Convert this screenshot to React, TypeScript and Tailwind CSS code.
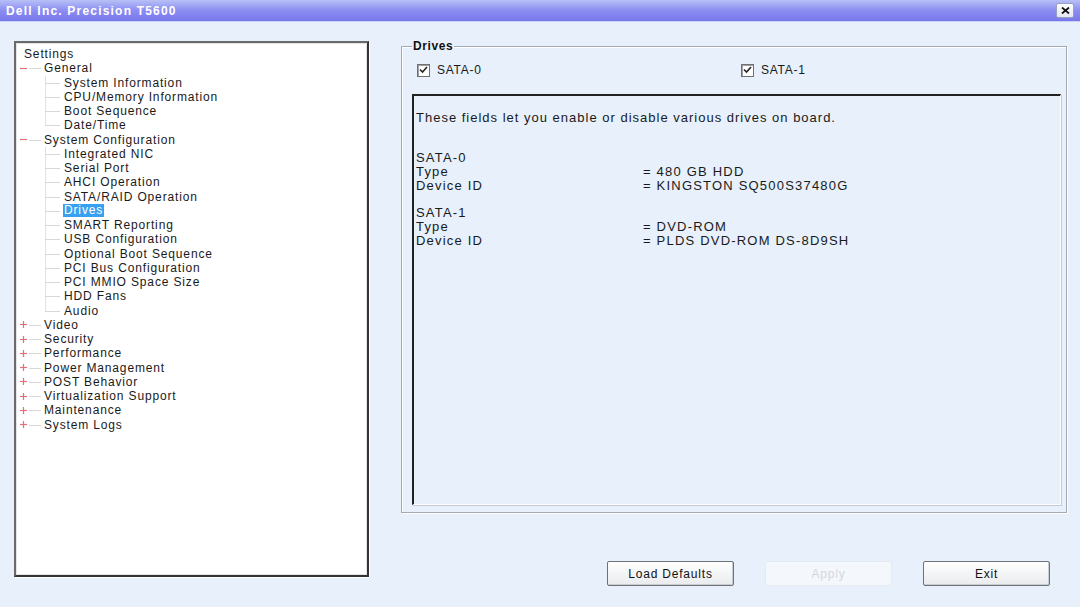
import { Fragment } from 'react';

type TreeNode = {
  label: string;
  level: 0 | 1 | 2;
  expander?: '+' | '-';
  last?: boolean;
  selected?: boolean;
};

const tree: TreeNode[] = [
  { label: 'Settings', level: 0 },
  { label: 'General', level: 1, expander: '-' },
  { label: 'System Information', level: 2 },
  { label: 'CPU/Memory Information', level: 2 },
  { label: 'Boot Sequence', level: 2 },
  { label: 'Date/Time', level: 2, last: true },
  { label: 'System Configuration', level: 1, expander: '-' },
  { label: 'Integrated NIC', level: 2 },
  { label: 'Serial Port', level: 2 },
  { label: 'AHCI Operation', level: 2 },
  { label: 'SATA/RAID Operation', level: 2 },
  { label: 'Drives', level: 2, selected: true },
  { label: 'SMART Reporting', level: 2 },
  { label: 'USB Configuration', level: 2 },
  { label: 'Optional Boot Sequence', level: 2 },
  { label: 'PCI Bus Configuration', level: 2 },
  { label: 'PCI MMIO Space Size', level: 2 },
  { label: 'HDD Fans', level: 2 },
  { label: 'Audio', level: 2, last: true },
  { label: 'Video', level: 1, expander: '+' },
  { label: 'Security', level: 1, expander: '+' },
  { label: 'Performance', level: 1, expander: '+' },
  { label: 'Power Management', level: 1, expander: '+' },
  { label: 'POST Behavior', level: 1, expander: '+' },
  { label: 'Virtualization Support', level: 1, expander: '+' },
  { label: 'Maintenance', level: 1, expander: '+' },
  { label: 'System Logs', level: 1, expander: '+' },
];

const drives = [
  { name: 'SATA-0', type: '480 GB HDD', id: 'KINGSTON SQ500S37480G' },
  { name: 'SATA-1', type: 'DVD-ROM', id: 'PLDS DVD-ROM DS-8D9SH' },
];

function Expander({ sign }: { sign: '+' | '-' }) {
  return (
    <div className="relative w-[20px] h-full flex items-center">
      <div className="absolute left-[10px] top-[7px] w-[12px] h-[1px] bg-[#d8d8d8]" />
      <svg width="9" height="9" viewBox="0 0 9 9" className="relative">
        <path d="M1 4.5 H8" stroke="#e0707a" strokeWidth="1.2" />
        {sign === '+' && <path d="M4.5 1 V8" stroke="#e0707a" strokeWidth="1.2" />}
      </svg>
    </div>
  );
}

function TreeRow({ node }: { node: TreeNode }) {
  if (node.level === 0) {
    return (
      <div className="h-[14.25px] flex items-center pl-[7px]">
        <span>{node.label}</span>
      </div>
    );
  }
  if (node.level === 1) {
    return (
      <div className="h-[14.25px] flex items-center pl-[2px]">
        <Expander sign={node.expander ?? '+'} />
        <span className="ml-[4px] px-[1px]">{node.label}</span>
      </div>
    );
  }
  return (
    <div className="h-[14.25px] flex items-center pl-[27px]">
      {/* vertical guide + elbow into the child label */}
      <div className="relative w-[18px] h-full">
        <div
          className={
            node.last
              ? 'absolute left-[1px] top-0 h-[7px] w-[1px] bg-[#e2e2e2]'
              : 'absolute left-[1px] top-0 h-full w-[1px] bg-[#e2e2e2]'
          }
        />
        <div className="absolute left-[1px] top-[7px] w-[15px] h-[1px] bg-[#d8d8d8]" />
      </div>
      <span
        className={
          node.selected
            ? 'ml-[1px] px-[1px] bg-[#38a0f0] text-white leading-[13px]'
            : 'ml-[1px] px-[1px]'
        }
      >
        {node.label}
      </span>
    </div>
  );
}

function Checkbox({ label }: { label: string }) {
  return (
    <label className="flex items-center gap-[7px]">
      <span className="w-[13px] h-[13px] border border-[#707070] bg-white shadow-[inset_1px_1px_0_#a0a0a0] flex items-center justify-center">
        <svg width="9" height="8" viewBox="0 0 9 8">
          <path d="M1 3.5 L3.5 6 L8 1" fill="none" stroke="#222" strokeWidth="1.6" />
        </svg>
      </span>
      <span>{label}</span>
    </label>
  );
}

function WinButton({ label, disabled }: { label: string; disabled?: boolean }) {
  return (
    <button
      disabled={disabled}
      className={
        disabled
          ? 'w-[127px] h-[25px] rounded-[2px] border border-[#e6ebf2] bg-[#f4f7fb] text-[#d4d8de]'
          : 'w-[127px] h-[25px] rounded-[2px] border border-[#6d7278] bg-gradient-to-b from-white to-[#e9ebee] text-[#111] shadow-[inset_-1px_-1px_0_#c9cdd2]'
      }
    >
      {label}
    </button>
  );
}

export default function App() {
  return (
    <div className="w-[1080px] h-[607px] bg-[#e7f0fb] flex flex-col overflow-hidden font-['Liberation_Sans',Arial,sans-serif] text-[12px] tracking-[0.85px] text-[#1a1a1a]">
      <div className="h-[22px] flex items-center justify-between bg-gradient-to-b from-[#b8c0f6] via-[#8c8cf2] to-[#7878ec] border-b border-[#c9d2f5]">
        <span className="pl-[6px] pt-[1px] text-white font-bold text-[12px] tracking-[1.2px]">
          Dell Inc. Precision T5600
        </span>
        <button className="mr-[6px] w-[18px] h-[15px] rounded-[2px] border border-[#9aa0c0] bg-gradient-to-b from-white to-[#e4e7ef] flex items-center justify-center">
          <svg width="9" height="7" viewBox="0 0 9 7">
            <path d="M1 0.5 L8 6.5 M8 0.5 L1 6.5" stroke="#111" strokeWidth="1.8" />
          </svg>
        </button>
      </div>

      <div className="flex flex-1">
        <div className="ml-[14px] mt-[19px] w-[355px] h-[536px] bg-white border-2 border-t-[#6a6a6a] border-l-[#6a6a6a] border-r-[#333] border-b-[#333] shadow-[1px_1px_0_#fff]">
          <div className="pt-[3px] border border-[#e4e4e4] h-full">
            {tree.map((node) => (
              <Fragment key={node.label}>
                <TreeRow node={node} />
              </Fragment>
            ))}
          </div>
        </div>

        <div className="ml-[32px] mt-[15px] flex flex-col">
          <fieldset className="w-[666px] h-[476px] border border-[#a3aab6] shadow-[inset_1px_1px_0_#fff,1px_1px_0_#fff] px-[10px] pt-[4px] pb-[7px]">
            <legend className="px-[1px] font-bold text-[12px] tracking-[0.6px] text-[#111]">
              Drives
            </legend>
            <div className="flex h-[22px] items-center pl-[5px] tracking-[0.75px]">
              <div className="w-[324px]">
                <Checkbox label="SATA-0" />
              </div>
              <Checkbox label="SATA-1" />
            </div>
            <div className="mt-[13px] h-[411px] mr-[-5px] border-t-2 border-l-2 border-t-[#222] border-l-[#222] border-r border-b border-r-[#fff] border-b-[#fff] shadow-[1px_1px_0_#c4cad3] px-[2px] pt-[14px] text-[13px] tracking-[1px]">
              <p className="leading-[16px]">These fields let you enable or disable various drives on board.</p>
              <div className="mt-[25px] flex flex-col gap-[13px]">
                {drives.map((d) => (
                  <div key={d.name} className="leading-[14px] tracking-[1.2px]">
                    <div>{d.name}</div>
                    <div className="flex">
                      <span className="w-[227px]">Type</span>
                      <span>= {d.type}</span>
                    </div>
                    <div className="flex">
                      <span className="w-[227px]">Device ID</span>
                      <span>= {d.id}</span>
                    </div>
                  </div>
                ))}
              </div>
            </div>
          </fieldset>

          <div className="mt-[48px] ml-[206px] flex gap-[31px] tracking-[0.8px]">
            <WinButton label="Load Defaults" />
            <WinButton label="Apply" disabled />
            <WinButton label="Exit" />
          </div>
        </div>
      </div>
    </div>
  );
}
